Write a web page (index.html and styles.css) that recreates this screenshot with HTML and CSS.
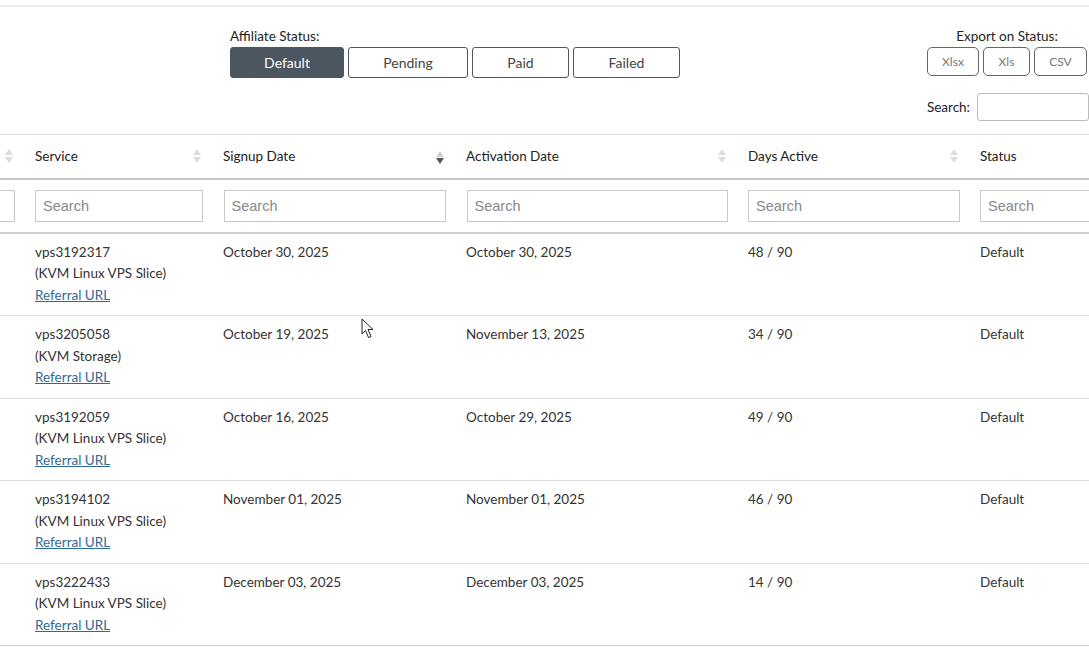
FILE: index.html
```html
<!DOCTYPE html>
<html lang="en">
<head>
    <meta charset="UTF-8">
    <title>Affiliate Referrals</title>
    <link rel="stylesheet" href="styles.css">
</head>
<body>
    <div class="page">
        <div class="toolbar">
            <div class="status-group">
                <div class="group-label">Affiliate Status:</div>
                <div class="btn-row">
                    <button class="status-btn active">Default</button>
                    <button class="status-btn pending">Pending</button>
                    <button class="status-btn paid">Paid</button>
                    <button class="status-btn failed">Failed</button>
                </div>
            </div>
            <div class="export-group">
                <div class="group-label export-label">Export on Status:</div>
                <div class="btn-row export-row">
                    <button class="export-btn xlsx">Xlsx</button>
                    <button class="export-btn xls">Xls</button>
                    <button class="export-btn csv">CSV</button>
                </div>
                <div class="table-search">
                    <label for="q">Search:</label>
                    <input type="text" id="q">
                </div>
            </div>
        </div>

        <div class="table-wrap">
            <table class="referrals">
                <colgroup>
                    <col class="c-select">
                    <col class="c-service">
                    <col class="c-signup">
                    <col class="c-activation">
                    <col class="c-days">
                    <col class="c-status">
                </colgroup>
                <thead>
                    <tr class="head-row">
                        <th class="sortable"></th>
                        <th class="sortable">Service</th>
                        <th class="sortable desc">Signup Date</th>
                        <th class="sortable">Activation Date</th>
                        <th class="sortable">Days Active</th>
                        <th>Status</th>
                    </tr>
                    <tr class="filter-row">
                        <th><input type="text"></th>
                        <th><input type="text" placeholder="Search"></th>
                        <th><input type="text" placeholder="Search"></th>
                        <th><input type="text" placeholder="Search"></th>
                        <th><input type="text" placeholder="Search"></th>
                        <th><input type="text" placeholder="Search"></th>
                    </tr>
                </thead>
                <tbody>
                    <tr>
                        <td></td>
                        <td>vps3192317<br>(KVM Linux VPS Slice)<br><a href="#">Referral URL</a></td>
                        <td>October 30, 2025</td>
                        <td>October 30, 2025</td>
                        <td>48 / 90</td>
                        <td>Default</td>
                    </tr>
                    <tr>
                        <td></td>
                        <td>vps3205058<br>(KVM Storage)<br><a href="#">Referral URL</a></td>
                        <td>October 19, 2025</td>
                        <td>November 13, 2025</td>
                        <td>34 / 90</td>
                        <td>Default</td>
                    </tr>
                    <tr>
                        <td></td>
                        <td>vps3192059<br>(KVM Linux VPS Slice)<br><a href="#">Referral URL</a></td>
                        <td>October 16, 2025</td>
                        <td>October 29, 2025</td>
                        <td>49 / 90</td>
                        <td>Default</td>
                    </tr>
                    <tr>
                        <td></td>
                        <td>vps3194102<br>(KVM Linux VPS Slice)<br><a href="#">Referral URL</a></td>
                        <td>November 01, 2025</td>
                        <td>November 01, 2025</td>
                        <td>46 / 90</td>
                        <td>Default</td>
                    </tr>
                    <tr>
                        <td></td>
                        <td>vps3222433<br>(KVM Linux VPS Slice)<br><a href="#">Referral URL</a></td>
                        <td>December 03, 2025</td>
                        <td>December 03, 2025</td>
                        <td>14 / 90</td>
                        <td>Default</td>
                    </tr>
                </tbody>
            </table>
        </div>

        <!-- mouse pointer -->
        <svg class="pointer" width="16" height="22" viewBox="0 0 16 22">
            <path d="M1 1 L1 16 L4.5 12.5 L7.5 19.5 L10 18.5 L7 11.5 L12 11.5 Z" fill="#fff" stroke="#222" stroke-width="1" stroke-linejoin="round"/>
        </svg>
    </div>
</body>
</html>
```

FILE: styles.css
```css
:root {
    --text: #333;
    --line: #dedede;
    --btn-dark: #4b5661;
    --link: #2f6a94;
}
* {
    box-sizing: border-box;
}
body {
    margin: 0;
    background: #fff;
    color: var(--text);
    font-family: Lato, 'Open Sans', Arial, sans-serif;
    font-size: 13.5px;
    overflow: hidden;
}
.page {
    position: relative;
    width: 1089px;
    height: 651px;
    overflow: hidden;
    border-top: 2px solid #ececec;
    margin-top: 5px;
}

/* top toolbar */
.toolbar {
    display: flex;
    justify-content: space-between;
    height: 127px;
    padding: 20px 0 0 230px;
}
.group-label {
    font-size: 13.5px;
    line-height: 18px;
    color: #222;
    margin-bottom: 2px;
}
.btn-row {
    display: flex;
    gap: 4px;
}
.status-btn {
    height: 31px;
    border: 1.5px solid #555;
    border-radius: 3px;
    background: #fff;
    color: #444;
    font-family: inherit;
    font-size: 14px;
    padding: 0;
}
.status-btn.active {
    background: var(--btn-dark);
    border-color: var(--btn-dark);
    color: #fff;
}
.status-btn.active { width: 114px; }
.status-btn.pending { width: 120px; }
.status-btn.paid { width: 97px; }
.status-btn.failed { width: 107px; }

.export-group {
    display: flex;
    flex-direction: column;
    align-items: flex-end;
    width: 170px;
}
.export-label {
    align-self: center;
    margin-left: 6px;
}
.export-row {
    width: 100%;
    padding-left: 8px;
}
.export-btn {
    height: 29px;
    border: 1.5px solid #666;
    border-radius: 5px;
    background: #fff;
    color: #777;
    font-family: inherit;
    font-size: 12px;
    padding: 0;
}
.export-btn.xlsx { width: 52px; }
.export-btn.xls { width: 47px; }
.export-btn.csv { width: 53px; }

.table-search {
    display: flex;
    align-items: center;
    justify-content: flex-end;
    gap: 7px;
    margin-top: 17px;
    width: 170px;
}
.table-search label {
    font-size: 13.5px;
    color: #222;
}
.table-search input {
    width: 112px;
    height: 28px;
    border: 1px solid #bbb;
    border-radius: 3px;
    flex-shrink: 0;
}

/* referrals table */
.table-wrap {
    overflow: hidden;
}
.referrals {
    border-collapse: collapse;
    table-layout: fixed;
    width: 1325px;
    margin-left: -150px;
    border-top: 1px solid var(--line);
}
.c-select { width: 175px; }
.c-service { width: 188px; }
.c-signup { width: 243px; }
.c-activation { width: 282px; }
.c-days { width: 232px; }
.c-status { width: 205px; }

.head-row th {
    position: relative;
    height: 44px;
    padding: 0 10px;
    text-align: left;
    font-weight: normal;
    color: #222;
    border-bottom: 2px solid #c8c8c8;
}
/* sort arrows */
.sortable::before,
.sortable::after {
    content: "";
    position: absolute;
    right: 12px;
    border-left: 4px solid transparent;
    border-right: 4px solid transparent;
}
.sortable::before {
    top: 14px;
    border-bottom: 6px solid #dcdcdc;
}
.sortable::after {
    top: 22px;
    border-top: 6px solid #dcdcdc;
}
.sortable.desc::before {
    border-bottom-color: #d0d0d0;
    top: 16px;
}
.sortable.desc::after {
    border-top-color: #555;
    top: 23px;
}

.filter-row th {
    height: 54px;
    padding: 0 10px;
    border-bottom: 2px solid #cfcfcf;
}
.filter-row input {
    width: 100%;
    height: 32px;
    border: 1px solid #c9c9c9;
    padding: 0 7px;
    font-family: 'Liberation Sans', Arial, sans-serif;
    font-size: 14.5px;
}
.filter-row input::placeholder {
    color: #8a8a8a;
}
.filter-row th:nth-child(2) input { width: 168px; }
.filter-row th:nth-child(3) input { width: 222px; }
.filter-row th:nth-child(4) input { width: 261px; }
.filter-row th:nth-child(5) input { width: 212px; }

.referrals td {
    vertical-align: top;
    padding: 8px 10px 9px;
    line-height: 21.5px;
    border-bottom: 1px solid var(--line);
    color: #333;
}
.referrals tbody tr:last-child td {
    border-bottom-color: #cfcfcf;
}
.referrals a {
    color: var(--link);
}

.pointer {
    position: absolute;
    left: 361px;
    top: 311px;
}
```
